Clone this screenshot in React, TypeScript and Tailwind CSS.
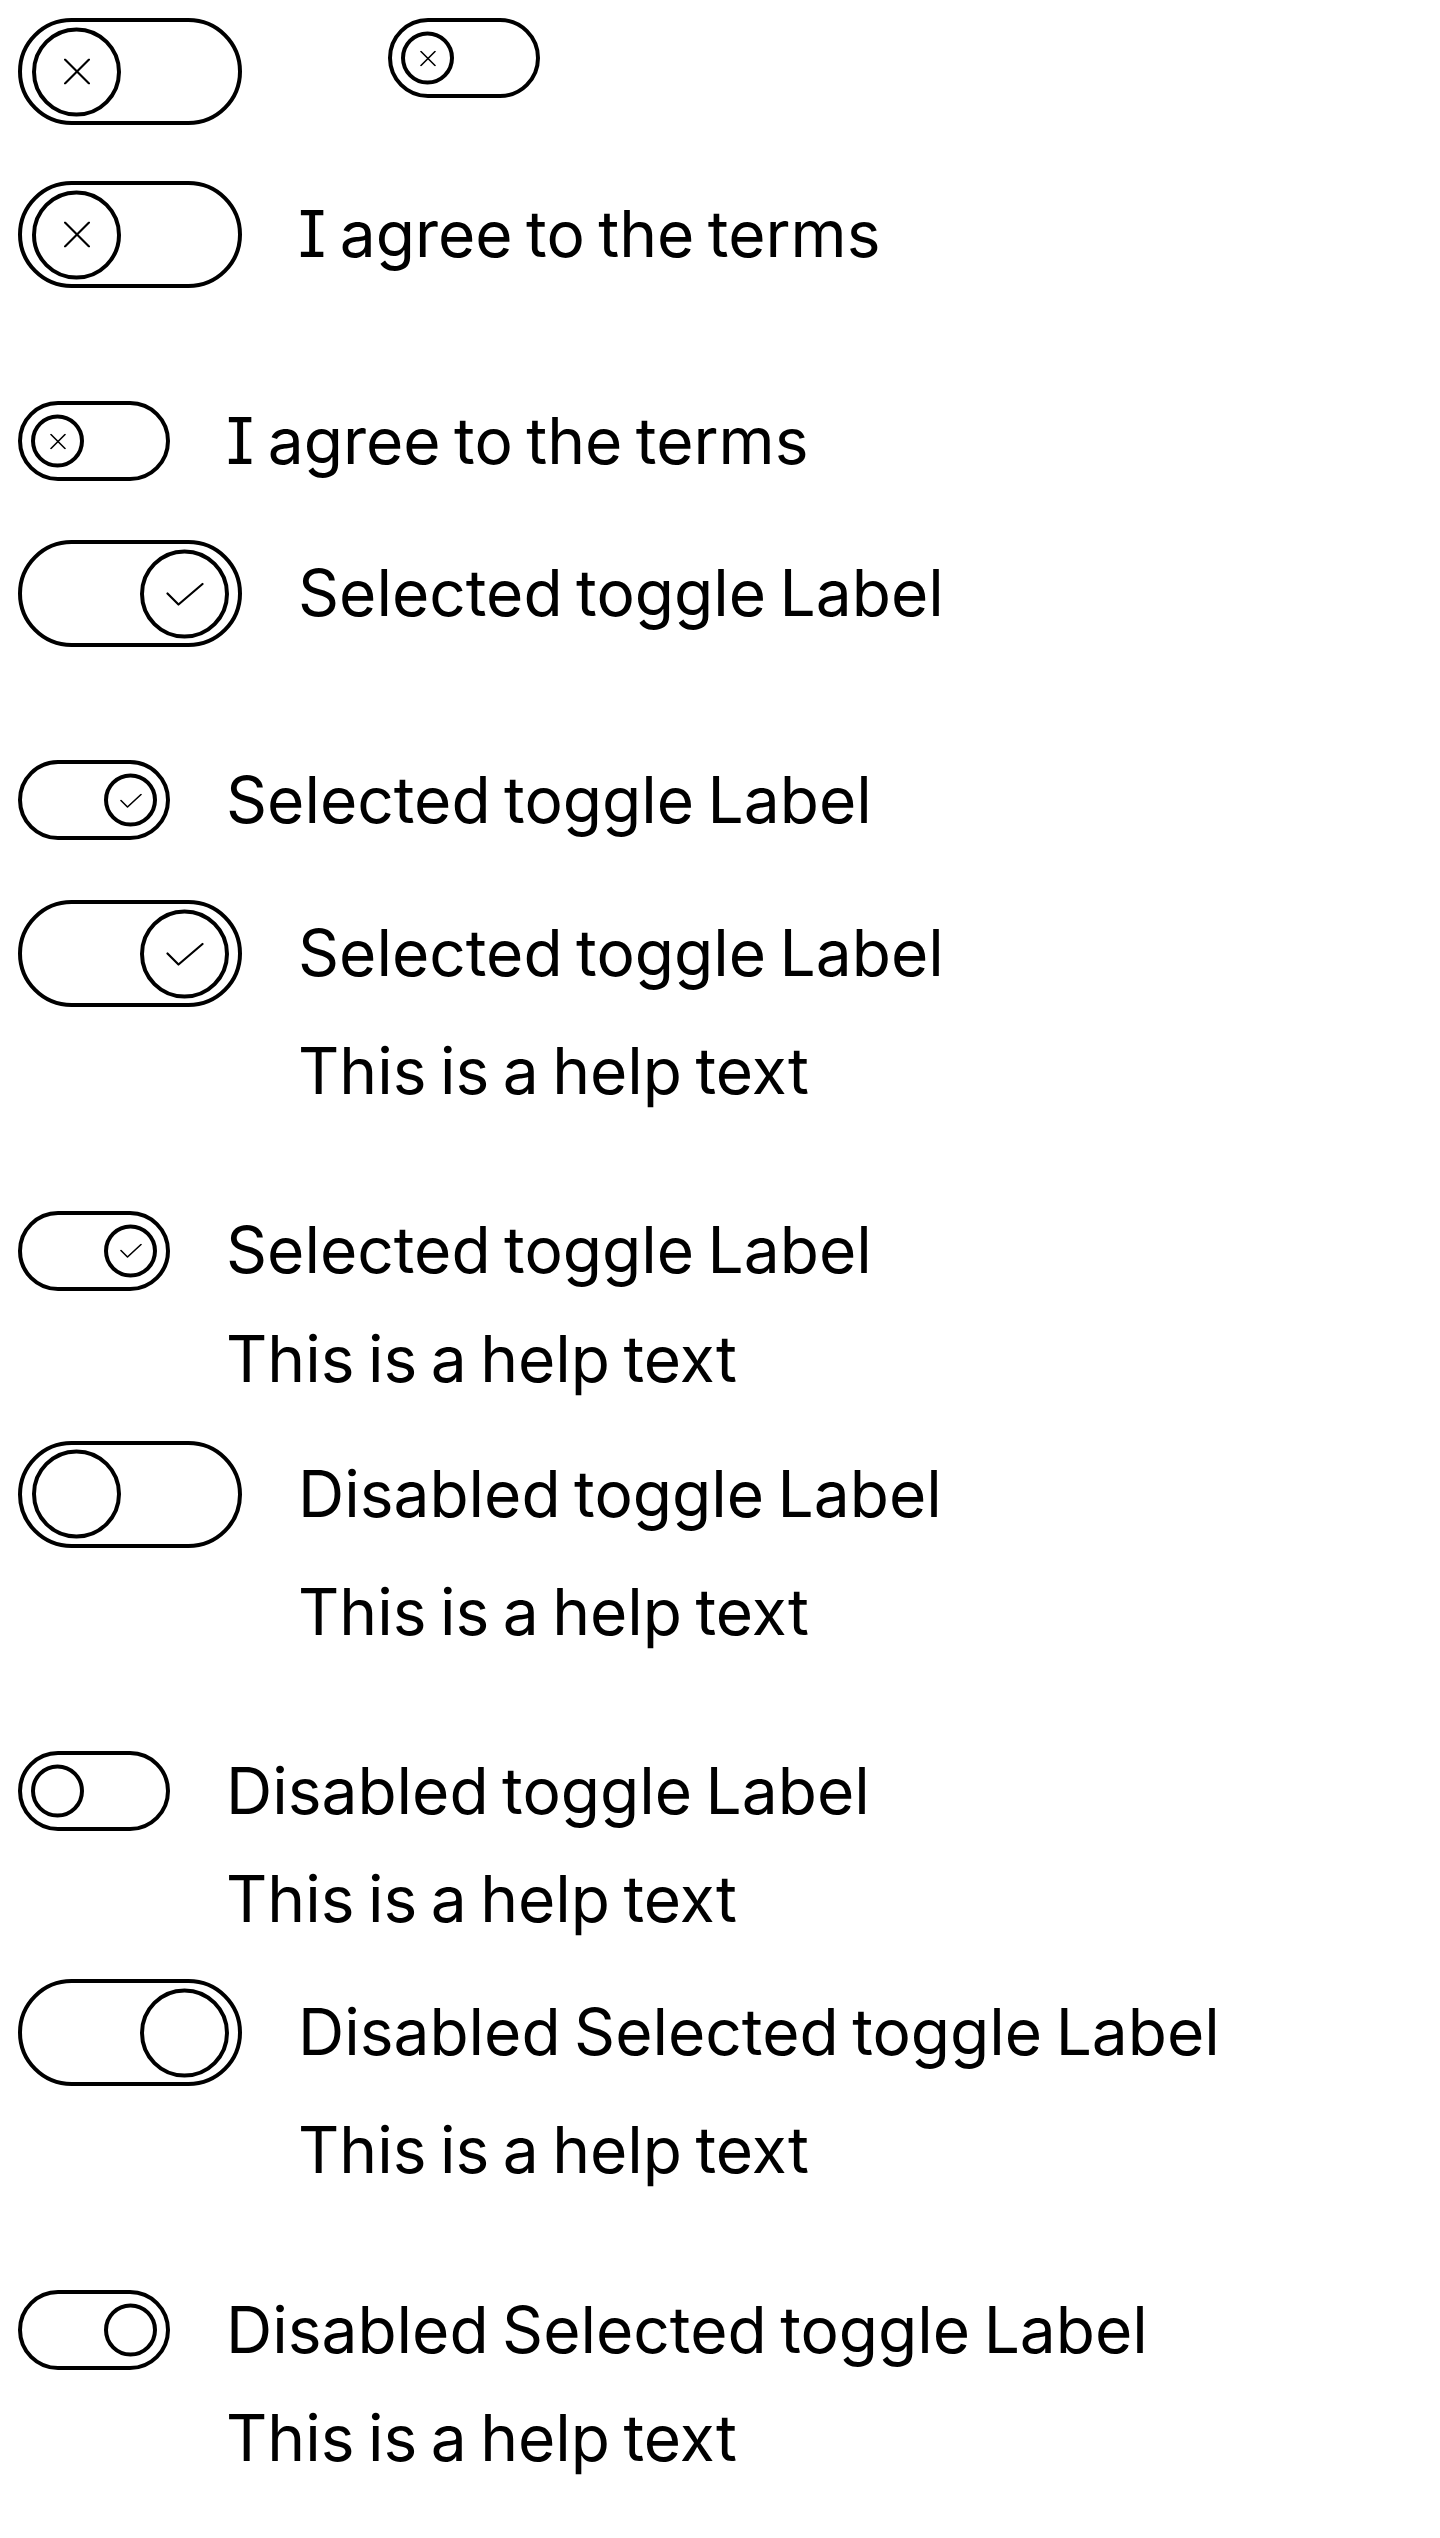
import React from "react";

type Size = "lg" | "sm";

function XIcon({ size }: { size: Size }) {
  const s = size === "lg" ? 26 : 16;
  return (
    <svg width={s} height={s} viewBox={`0 0 ${s} ${s}`} fill="none" stroke="black" strokeWidth={size === "lg" ? 2.2 : 1.6} strokeLinecap="round">
      <line x1="1" y1="1" x2={s - 1} y2={s - 1} />
      <line x1={s - 1} y1="1" x2="1" y2={s - 1} />
    </svg>
  );
}

function CheckIcon({ size }: { size: Size }) {
  if (size === "lg") {
    return (
      <svg width="38" height="24" viewBox="0 0 38 24" fill="none" stroke="black" strokeWidth="2.2" strokeLinecap="round" strokeLinejoin="round" className="mt-[2px]">
        <polyline points="1.5,11 12.5,22 36.5,1.5" />
      </svg>
    );
  }
  return (
    <svg width="22" height="15" viewBox="0 0 22 15" fill="none" stroke="black" strokeWidth="1.6" strokeLinecap="round" strokeLinejoin="round" className="mt-[1px]">
      <polyline points="1,7 7.5,13.5 21,1" />
    </svg>
  );
}

function Toggle({ size, checked = false, icon = true }: { size: Size; checked?: boolean; icon?: boolean }) {
  const lg = size === "lg";
  const track = lg
    ? "relative block shrink-0 w-[224px] h-[107px] rounded-full border-4 border-black bg-white"
    : "relative block shrink-0 w-[152px] h-[80px] rounded-full border-4 border-black bg-white";
  let knob = "absolute top-1/2 -translate-y-1/2 flex items-center justify-center rounded-full border-4 border-black bg-white ";
  if (lg) knob += checked ? "w-[89px] h-[89px] right-[9px]" : "w-[89px] h-[89px] left-[10px]";
  else knob += checked ? "w-[53px] h-[53px] right-[9px]" : "w-[53px] h-[53px] left-[9px]";
  return (
    <span className={track}>
      <span className={knob}>{icon ? checked ? <CheckIcon size={size} /> : <XIcon size={size} /> : null}</span>
    </span>
  );
}

function Row({
  size,
  checked,
  icon = true,
  label,
  help,
  className,
}: {
  size: Size;
  checked?: boolean;
  icon?: boolean;
  label: string;
  help?: string;
  className: string;
}) {
  const lg = size === "lg";
  return (
    <div className={"flex items-start gap-[56px] " + className}>
      <Toggle size={size} checked={checked} icon={icon} />
      <div className="flex flex-col">
        <div className={lg ? "flex h-[107px] items-center" : "flex h-[80px] items-center"}>
          <span className="text-[64px] leading-[1.2] whitespace-nowrap">{label}</span>
        </div>
        {help ? (
          <div className={lg ? "mt-[26px] text-[64px] leading-[1.2] whitespace-nowrap" : "mt-[30px] text-[64px] leading-[1.2] whitespace-nowrap"}>
            {help}
          </div>
        ) : null}
      </div>
    </div>
  );
}

export default function App() {
  return (
    <div className="min-h-[2538px] bg-white text-black pl-[18px] pt-[18px] [font-family:Inter,'Noto_Sans',sans-serif] [font-feature-settings:'cv08'] [word-spacing:-4.5px]">
      <div className="flex items-start">
        <Toggle size="lg" />
        <div className="ml-[146px]">
          <Toggle size="sm" />
        </div>
      </div>
      <Row size="lg" label="I agree to the terms" className="mt-[56px]" />
      <Row size="sm" label="I agree to the terms" className="mt-[113px]" />
      <Row size="lg" checked label="Selected toggle Label" className="mt-[59px]" />
      <Row size="sm" checked label="Selected toggle Label" className="mt-[113px]" />
      <Row size="lg" checked label="Selected toggle Label" help="This is a help text" className="mt-[60px]" />
      <Row size="sm" checked label="Selected toggle Label" help="This is a help text" className="mt-[101px]" />
      <Row size="lg" icon={false} label="Disabled toggle Label" help="This is a help text" className="mt-[43px]" />
      <Row size="sm" icon={false} label="Disabled toggle Label" help="This is a help text" className="mt-[101px]" />
      <Row size="lg" checked icon={false} label="Disabled Selected toggle Label" help="This is a help text" className="mt-[41px]" />
      <Row size="sm" checked icon={false} label="Disabled Selected toggle Label" help="This is a help text" className="mt-[101px]" />
    </div>
  );
}
